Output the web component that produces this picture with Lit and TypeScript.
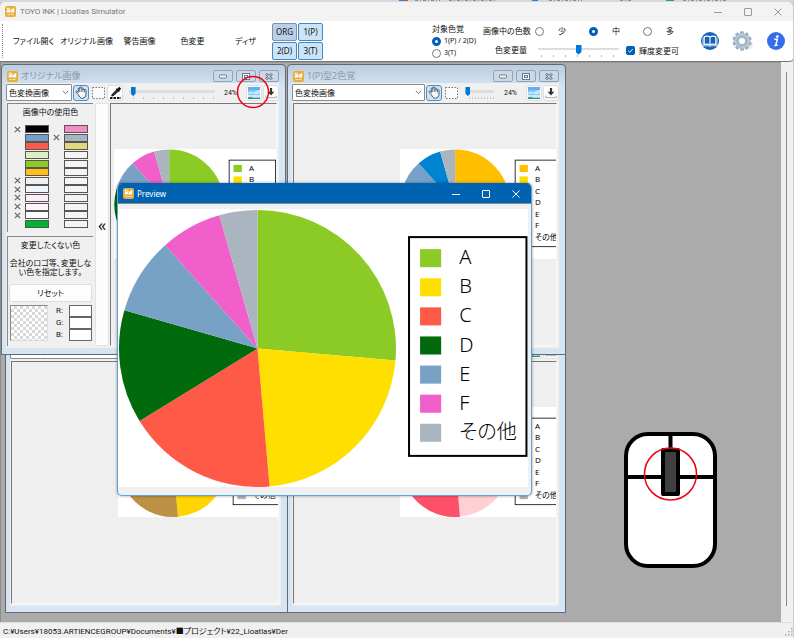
import { LitElement, html, svg, css, nothing } from "lit";
import { customElement, property } from "lit/decorators.js";
import { classMap } from "lit/directives/class-map.js";

const base = css`
  * { box-sizing: border-box; }
  button, select, input { font: inherit; font-feature-settings: inherit; color: inherit; margin: 0; padding: 0; }
  svg { display: block; flex: none; }
`;

const logo = html`<svg width="11" height="11" viewBox="0 0 11 11" aria-hidden="true">
  <rect width="11" height="11" rx="2" fill="#e8ad3a" />
  <path d="M1.800 1.800H4.600L6 4L9.200 1.800V6.600H1.800Z" fill="#fff" />
  <path d="M1.800 4.200L4 2.400L6 5.200L4.600 6.600" fill="none" stroke="#e8ad3a" stroke-width=".7" />
  <path d="M2.500 8.500H4.500M5.500 8.500H8.500" stroke="#fbe7bd" stroke-width="1" />
</svg>`;

const hand = html`<svg width="12" height="13" viewBox="0 0 12 13" fill="#f4f8fc" stroke="#3d4650" stroke-width=".9" stroke-linejoin="round" aria-hidden="true">
  <path d="M3.200 8.500L1.200 6.300C.6 5.500 1.500 4.800 2.200 5.400L3.300 6.500V2.600C3.300 1.700 4.700 1.700 4.700 2.600V1.700C4.700.7 6.300.7 6.300 1.700V2.300C6.400 1.400 7.900 1.500 7.900 2.500V3.500C8.100 2.700 9.500 2.800 9.500 3.700C10.200 3.200 11 3.700 11 4.400V8C11 10.600 9.600 12.300 7.200 12.300C5.200 12.300 4.300 10.500 3.200 8.500Z" />
  <path d="M4.700 2.600V6M6.300 2.300V5.800M7.900 3V6M9.500 3.700V6.300" fill="none" stroke-width=".7" />
</svg>`;
const marquee = html`<svg width="13" height="12" viewBox="0 0 13 12" aria-hidden="true"><rect x=".5" y=".5" width="12" height="11" fill="#fafafa" stroke="#777" stroke-dasharray="1.500 1.500" /></svg>`;
const dropper = html`<svg width="13" height="13" viewBox="0 0 13 13" aria-hidden="true">
  <path d="M10.200.8L12.200 2.800L10.400 4.700L10.800 5.200L9.800 6.100L6.800 3.200L7.800 2.300L8.300 2.700Z" fill="#111" />
  <path d="M7.500 4L9 5.500L4.500 9.500L2.800 10L3.300 8.200Z" fill="#333" stroke="#111" stroke-width="1" />
  <path d="M1 12H12" stroke="#111" stroke-width="2" stroke-dasharray="2.500 1" />
</svg>`;
const picture = html`<svg width="12" height="12" viewBox="0 0 12 12" aria-hidden="true">
  <rect width="12" height="12" fill="#7cc4f4" /><rect width="12" height="3" fill="#5fb0f0" />
  <path d="M0 5.500L3 4.500L6 5L9 3.500L12 3V6.500L8 7.500L4 6.500L0 7.500Z" fill="#c4e6fa" />
  <rect y="8" width="12" height="2.500" fill="#c9eef2" />
  <path d="M0 10.500L3 10L6 11L12 10.800V12H0Z" fill="#3f8a86" />
</svg>`;
const download = html`<svg width="12" height="12" viewBox="0 0 12 12" aria-hidden="true">
  <path d="M6 1V5.500" stroke="#333" stroke-width="2.200" /><path d="M2.600 4.800H9.400L6 8.400Z" fill="#333" />
  <path d="M.7 8.500V10.700H11.300V8.500" fill="none" stroke="#aaa" />
</svg>`;
const chevron = html`<svg class="chevron" width="7" height="5" viewBox="0 0 7 5" aria-hidden="true"><path d="M.8.8L3.500 3.700L6.200.8" fill="none" stroke="#555" stroke-width=".8" /></svg>`;

const cross = html`<svg width="7" height="7" viewBox="0 0 7 7" aria-label="除外"><path d="M.8.8L6.200 6.200M6.200.8L.8 6.200" stroke="#666" stroke-width="1.200" /></svg>`;

const stops = [0, 95, 175, 238.4, 286, 318.2, 344, 360];
const names = ["A", "B", "C", "D", "E", "F", "その他"];
const ORIGINAL = ["#8ccb25", "#ffdf00", "#ff5a47", "#006a0c", "#78a1c6", "#f05fca", "#aab5c0"];

/** A pie chart of seven shares with its legend. */
@customElement("pie-image")
export class PieImage extends LitElement {
  static styles = css`
    :host { display: block; flex: none; background: #fff; }
    svg { display: block; height: 100%; }
    text { font: 20px "Noto Sans", "Noto Sans CJK JP", sans-serif; font-weight: var(--legend-weight, 300); font-feature-settings: "palt"; fill: #000; }
  `;
  @property({ attribute: false }) colors: string[] = ORIGINAL;

  private slice(i: number) {
    const at = (deg: number) => {
      const a = (deg * Math.PI) / 180;
      return `${139 + 138 * Math.sin(a)} ${139 - 138 * Math.cos(a)}`;
    };
    return svg`<path d="M139 139L${at(stops[i])}A138 138 0 0 1 ${at(stops[i + 1])}Z" fill=${this.colors[i]} />`;
  }

  render() {
    return html`<svg viewBox="0 0 409 277" role="img" aria-label="円グラフ">
      ${this.colors.map((_, i) => this.slice(i))}
      <rect x="290" y="28" width="117" height="218" fill="#fff" stroke="#000" stroke-width="2" />
      ${names.map((n, i) => svg`
        <rect x="301" y=${40 + i * 29} width="21" height="18" fill=${this.colors[i]} />
        <text x="340" y=${55 + i * 29}>${n}</text>`)}
    </svg>`;
  }
}

const used: [string, boolean][][] = [
  [["#000", true], ["#f48dc4", false]],
  [["#739fc6", false], ["#a8b4bf", true]],
  [["#ff5a47", false], ["#e2d97c", false]],
  [["#dff0c0", false], ["#f4f4f4", false]],
  [["#8ccb25", false], ["#f4f4f4", false]],
  [["#ffbe18", false], ["#f4f4f4", false]],
  [["#f0efed", true], ["#f4f4f4", false]],
  [["#eef6fd", true], ["#f4f4f4", false]],
  [["#fbeef9", true], ["#f4f4f4", false]],
  [["#fdf4fc", true], ["#f4f4f4", false]],
  [["#fff", true], ["#f4f4f4", false]],
  [["#00b432", false], ["#f4f4f4", false]],
];

/** Side panel listing the colours in use and the colour to keep. */
@customElement("color-panel")
export class ColorPanel extends LitElement {
  static styles = [base, css`
    :host { display: flex; gap: 2px; }
    .panels { display: flex; flex-direction: column; gap: 4px; width: 86px; }
    section { border-top: 1px solid #888; border-left: 1px solid #888; text-align: center; }
    .used { height: 130px; }
    .keep { height: 110px; padding: 0 1px; }
    h2 { margin: 0; padding-top: 2px; font-size: 8px; font-weight: 400; line-height: 12px; }
    .grid { display: grid; grid-template-columns: 7px 24px 7px 24px; grid-template-rows: repeat(12, 1fr); column-gap: 4px; height: 103px; margin: 7px 0 0 6px; align-items: center; }
    .cell { height: 8px; border: 1px solid #555; }
    p { margin: 7px 0 6px; line-height: 9px; height: 20px; }
    .reset { display: block; width: 100%; height: 18px; border: 1px solid #ddd; border-radius: 2px; background: #fdfdfd; }
    .rgb { display: flex; justify-content: space-between; padding: 3px 0 0 1px; }
    .swatch { width: 38px; height: 36px; border: 1px solid #888; border-color: #888 #ddd #ddd #888; background: repeating-conic-gradient(#d8d8d8 0 25%, #fff 0 50%) 0 0 / 6px 6px; }
    .fields { width: 36px; font-family: Roboto, sans-serif; line-height: 10px; }
    label { display: flex; justify-content: space-between; align-items: center; height: 12px; }
    input { width: 23px; height: 12px; border: 1px solid #666; background: #fff; border-radius: 0; }
    .fold { width: 14px; border: 1px solid #e2e2e2; border-radius: 2px; background: #fcfcfc; font-size: 16px; line-height: 16px; }
  `];

  render() {
    return html`
      <div class="panels">
        <section class="used">
          <h2>画像中の使用色</h2>
          <div class="grid">
            ${used.flat().map(([c, off]) => html`<span>${off ? cross : nothing}</span><span class="cell" style="background:${c}"></span>`)}
          </div>
        </section>
        <section class="keep">
          <h2>変更したくない色</h2>
          <p>会社のロゴ等、変更しな<br />い色を指定します。</p>
          <button class="reset">リセット</button>
          <div class="rgb">
            <div class="swatch"></div>
            <div class="fields">
              ${["R:", "G:", "B:"].map((l) => html`<label>${l}<input type="text" /></label>`)}
            </div>
          </div>
        </section>
      </div>
      <button class="fold" aria-label="パネルを閉じる">«</button>`;
  }
}

/** A child window with its own tool row and picture. */
@customElement("sim-window")
export class SimWindow extends LitElement {
  static styles = [base, css`
    :host { display: flex; flex-direction: column; height: 291px; padding: 0 6px 6px 4px; border: 1px solid #5f6a76; border-radius: 4px 4px 0 0; background: linear-gradient(#bccddf, #d3e1ef 20px, #d7e5f3 21px); }
    header { display: flex; align-items: center; gap: 3px; height: 18px; padding: 4px 0 0 1px; flex: none; color: #8c99a9; font-size: 9px; }
    .caption { display: flex; gap: 3px; margin-left: auto; }
    .caption button { display: grid; place-items: center; width: 20px; height: 12px; border: 1px solid #8fa3ba; border-radius: 2px; background: #cbd8e6; }
    .tools { display: flex; align-items: center; gap: 1px; height: 19px; flex: none; background: #f0f0f0; }
    .pick { position: relative; flex: none; width: 66px; }
    .wide .pick { width: 133px; }
    select { appearance: none; display: block; width: 100%; height: 17px; padding-left: 2px; border: 1px solid #8a8a8a; border-radius: 1px; background: #fff; font-size: 8px; }
    .chevron { position: absolute; right: 3px; top: 6px; }
    .tool { display: grid; place-items: center; flex: none; width: 16px; height: 16px; border: 1px solid transparent; border-radius: 3px; background: none; }
    .on { border-color: #4b8fc6; background: #cce4f7; }
    .plain { border-color: #dedede; background: #fdfdfd; }
    .zoom { display: flex; flex: 1; align-items: center; justify-content: space-between; padding: 0 8px 0 5px; }
    .slide { width: 86px; }
    .wide .slide { width: 29px; }
    input { appearance: none; display: block; width: 100%; height: 10px; background: linear-gradient(#dedede, #dedede) 0 3px / 100% 3px no-repeat; }
    input::-webkit-slider-thumb { appearance: none; width: 5px; height: 9px; background: #0078d7; clip-path: polygon(0 0, 100% 0, 100% 75%, 50% 100%, 0 75%); }
    .ticks { height: 2px; margin-left: 4px; background: repeating-linear-gradient(90deg, #c4c4c4 0 1px, transparent 1px 10px); }
    .wide .ticks { background: repeating-linear-gradient(90deg, #c4c4c4 0 1px, transparent 1px 3px); }
    output { font: 7px Roboto, sans-serif; }
    .body { display: flex; gap: 1px; flex: 1; min-height: 0; padding: 1px 2px 2px 1px; background: #f0f0f0; }
    .view { flex: 1; min-width: 0; overflow: hidden; border: 1px solid; border-color: #777 #fafafa #fafafa #777; background: #efefef; padding: 45px 0 0 106px; }
    .near { padding-left: 3px; }
    pie-image { width: 163px; height: 110px; --legend-weight: 400; }
  `];
  @property() caption = "";
  @property({ type: Boolean }) panel = false;
  @property({ attribute: false }) colors: string[] = ORIGINAL;

  render() {
    return html`
      <header>${logo}<span>${this.caption}</span>
        <div class="caption">
          <button aria-label="最小化"><svg width="8" height="5" viewBox="0 0 8 5"><rect x=".5" y="1" width="7" height="3" rx="1" fill="#fff" stroke="#69778a" /></svg></button>
          <button aria-label="最大化"><svg width="8" height="7" viewBox="0 0 8 7"><rect x=".5" y=".5" width="7" height="6" fill="#fff" stroke="#69778a" /><rect x="2.500" y="2.500" width="3" height="2" fill="none" stroke="#69778a" /></svg></button>
          <button aria-label="閉じる"><svg width="8" height="7" viewBox="0 0 8 7"><path d="M1 .8L7 6.200M7 .8L1 6.200" stroke="#59677a" stroke-width="2.600" /><path d="M1.300 1L6.700 6M6.700 1L1.300 6" stroke="#fff" stroke-width="1" /></svg></button>
        </div>
      </header>
      <div class=${classMap({ tools: true, wide: !this.panel })}>
        <span class="pick"><select aria-label="表示画像"><option>色変換画像</option></select>${chevron}</span>
        <button class="tool on" aria-label="移動">${hand}</button>
        <button class="tool" aria-label="範囲選択">${marquee}</button>
        ${this.panel ? html`<button class="tool plain" aria-label="スポイト">${dropper}</button>` : nothing}
        <div class="zoom">
          <div class="slide"><input type="range" min="0" max="100" value="2" aria-label="倍率" /><div class="ticks"></div></div>
          <output>24%</output>
        </div>
        <button class="tool plain" aria-label="プレビュー">${picture}</button>
        <button class="tool plain" aria-label="保存">${download}</button>
      </div>
      <div class="body">
        ${this.panel ? html`<color-panel></color-panel>` : nothing}
        <div class=${classMap({ view: true, near: this.panel })}><pie-image .colors=${this.colors}></pie-image></div>
      </div>`;
  }
}

const teeth = Array.from({ length: 10 }, (_, i) => svg`<rect x="-1.600" y="-9.400" width="3.200" height="4" rx=".6" transform="rotate(${i * 36})" />`);

@customElement("app-root")
export class AppRoot extends LitElement {
  static styles = [base, css`
    :host { display: flex; flex-direction: column; min-height: 100vh; padding-right: 1px; background: #c9ccd1; color: #111; font: 8px/12px "Noto Sans", "Noto Sans CJK JP", sans-serif; font-feature-settings: "palt"; }
    .behind { height: 2px; background: #d5d8de; overflow: hidden; }
    .title { display: flex; align-items: center; gap: 4px; height: 19px; padding: 0 10px 0 5px; border-radius: 5px 5px 0 0; background: #f3f3f3; color: #777; font-family: Roboto, sans-serif; }
    .title .caption { display: flex; gap: 20px; margin-left: auto; }
    .caption button { display: grid; place-items: center; width: 10px; height: 10px; border: 0; background: none; }
    .bar { display: flex; align-items: center; height: 41px; padding: 0 8px 0 0; border-bottom: 1px solid #777; background: #fff; border-radius: 0 0 4px 0; }
    .grip { height: 34px; border-left: 1px dotted #888; margin: 0 4px 0 2px; }
    nav { display: grid; grid-template-columns: repeat(5, 53px); }
    nav button { border: 0; background: none; white-space: nowrap; height: 20px; }
    .modes { display: grid; grid-template-columns: 25px 25px; grid-auto-rows: 18px; gap: 1px; }
    .modes button { border: 1px solid #4488bd; border-radius: 2px; background: #cce4f7; }
    .modes .current { background: #b9cfe8; border-color: #7c93ad; }
    fieldset { margin: 0; padding: 0; border: 0; min-width: 0; }
    .target { margin: 0 7px 0 109px; width: 44px; }
    .target b { display: block; font-weight: 400; }
    label { display: flex; align-items: center; white-space: nowrap; }
    .target label { gap: 3px; font-size: 7px; }
    .radio { appearance: none; flex: none; width: 9px; height: 9px; border: 1px solid #777; border-radius: 50%; background: #fff; }
    .radio:checked { border: 3px solid #005fb8; }
    .amount { display: grid; grid-template-columns: 44px 142px; column-gap: 8px; row-gap: 7px; }
    .amount > span { text-align: right; white-space: nowrap; }
    .counts { display: flex; gap: 23px; }
    .counts label { gap: 14px; }
    .line { display: flex; align-items: center; gap: 7px; height: 13px; }
    .slide { flex: none; width: 84px; padding-left: 3px; }
    .range { appearance: none; display: block; width: 100%; height: 10px; margin: 0; background: linear-gradient(#dedede, #dedede) 0 3px / 100% 2px no-repeat; }
    .range::-webkit-slider-thumb { appearance: none; width: 6px; height: 10px; background: #0078d7; clip-path: polygon(0 0, 100% 0, 100% 75%, 50% 100%, 0 75%); }
    .ticks { height: 2px; margin-left: 3px; background: repeating-linear-gradient(90deg, #bbb 0 1px, transparent 1px 12px); }
    .line label { gap: 4px; }
    .check { position: relative; width: 9px; height: 9px; }
    .check input { appearance: none; display: block; width: 9px; height: 9px; border-radius: 2px; background: #005fb8; }
    .check svg { position: absolute; inset: 0; }
    .links { display: flex; align-items: center; gap: 14px; margin-left: auto; }
    .links a { display: block; }
    .desk { position: relative; display: flex; flex: 1; min-height: 560px; background: #ababab; border-left: 1px solid #8c8c8c; }
    .area { position: relative; flex: 1; overflow: hidden; border-top: 1px solid #999; }
    .scroll { width: 12px; padding: 10px 5px 16px; background: #f0f0f0; }
    .thumb { height: 100%; border-left: 1px solid #888; }
    sim-window, .preview, .ring, .mouse { position: absolute; }
    .w1 { left: 0; top: 1px; width: 285px; }
    .w2 { left: 286px; top: 1px; width: 279px; }
    .w3 { left: 4px; top: 259px; width: 283px; }
    .w4 { left: 286px; top: 259px; width: 279px; }
    .preview { left: 116px; top: 120px; width: 415px; height: 313px; display: flex; flex-direction: column; border: 1px solid #5fa3d9; border-top-color: #0063b1; border-radius: 5px; overflow: hidden; background: #f0f0f0; box-shadow: 0 0 3px #0006; }
    .preview header { display: flex; align-items: center; gap: 3px; height: 19px; padding: 0 10px 0 5px; background: #0063b1; color: #fff; flex: none; }
    .preview .caption { display: flex; gap: 20px; margin-left: auto; }
    .frame { border-top: 1px solid #888; padding-top: 5px; }
    .frame pie-image { height: 278px; width: 410px; }
    .ring { left: 235px; top: 12px; }
    .mouse { left: 622px; top: 368px; }
    footer { display: flex; align-items: center; justify-content: space-between; height: 16px; padding: 3px 0 0 3px; background: #f0f0f0; border-top: 1px solid #ddd; white-space: nowrap; font-family: Roboto, "Noto Sans CJK JP", sans-serif; }
  `];

  render() {
    const caption = (color: string) => html`<div class="caption">
      <button aria-label="最小化"><svg width="8" height="8" viewBox="0 0 8 8"><path d="M0 4.500H8" stroke=${color} /></svg></button>
      <button aria-label="最大化"><svg width="8" height="8" viewBox="0 0 8 8"><rect x=".5" y=".5" width="7" height="7" rx=".5" fill="none" stroke=${color} /></svg></button>
      <button aria-label="閉じる"><svg width="8" height="8" viewBox="0 0 8 8"><path d="M.5.5L7.500 7.500M7.500.5L.5 7.500" stroke=${color} /></svg></button>
    </div>`;
    return html`
      <div class="behind"><svg width="794" height="2" aria-hidden="true">
        <path d="M399 .5H404M532 .5H538" stroke="#2f7fe0" stroke-width="1" /><path d="M404 .5H408" stroke="#e0443a" /><path d="M666 .5H674" stroke="#2aa84a" />
        <path d="M415 .5H440M449 .5H496M549 .5H582M620 .5H632M683 .5H728" stroke="#8b9099" stroke-dasharray="3 2 1 2" />
      </svg></div>
      <div class="title">${logo}<span>TOYO INK | Lioatlas Simulator</span>${caption("#999")}</div>
      <div class="bar">
        <div class="grip"></div>
        <nav>${["ファイル開く", "オリジナル画像", "警告画像", "色変更", "ディザ"].map((t) => html`<button>${t}</button>`)}</nav>
        <div class="modes">${["ORG", "1(P)", "2(D)", "3(T)"].map((t, i) => html`<button class=${classMap({ current: i === 0 })}>${t}</button>`)}</div>
        <fieldset class="target"><b>対象色覚</b>
          <label><input class="radio" type="radio" name="target" checked />1(P) / 2(D)</label>
          <label><input class="radio" type="radio" name="target" />3(T)</label>
        </fieldset>
        <div class="amount">
          <span>画像中の色数</span>
          <fieldset class="counts">${["少", "中", "多"].map((t, i) => html`<label><input class="radio" type="radio" name="count" ?checked=${i === 1} />${t}</label>`)}</fieldset>
          <span>色変更量</span>
          <div class="line">
            <div class="slide"><input class="range" type="range" aria-label="色変更量" value="50" /><div class="ticks"></div></div>
            <label><span class="check"><input type="checkbox" checked /><svg width="9" height="9" viewBox="0 0 9 9"><path d="M2.200 4.700L3.800 6.200L6.800 3" fill="none" stroke="#fff" stroke-width=".9" /></svg></span>輝度変更可</label>
          </div>
        </div>
        <div class="links">
          <a href="#manual" aria-label="マニュアル"><svg width="18" height="18" viewBox="0 0 18 18"><circle cx="9" cy="9" r="9" fill="#1763b8" /><path d="M9 5C7.500 4 5 4 3.200 4.700V12.500C5 12 7.500 12 9 13C10.500 12 13 12 14.800 12.500V4.700C13 4 10.500 4 9 5ZM9 5V13" fill="none" stroke="#fff" stroke-width="1.100" /><path d="M2 5.500V13.800H7.500L9 14.500L10.500 13.800H16V5.500" fill="none" stroke="#fff" stroke-width=".8" /></svg></a>
          <a href="#settings" aria-label="設定"><svg width="20" height="20" viewBox="-9 -10 20 20"><ellipse cx="4" cy="4" rx="7" ry="5" fill="#ddd" opacity=".6" /><g fill="#a0b5c8" stroke="#7b93a8" stroke-width=".4">${teeth}</g><circle r="5.700" fill="none" stroke="#a3b8ca" stroke-width="3.600" /><circle r="6.400" fill="none" stroke="#cbd8e4" stroke-width=".8" /><circle r="3.800" fill="#fff" stroke="#7f96aa" stroke-width=".8" /></svg></a>
          <a href="#info" aria-label="情報"><svg width="18" height="18" viewBox="0 0 18 18"><circle cx="9" cy="9" r="9" fill="#356ee8" /><circle cx="10.300" cy="4.600" r="1.400" fill="#fff" /><path d="M7.300 7.300H10.300L8.800 13.200H10.600M7.300 13.400H8.800" fill="none" stroke="#fff" stroke-width="1.500" /></svg></a>
        </div>
      </div>
      <main class="desk">
        <div class="area">
          <sim-window class="w3" caption="2(D)型2色覚" .colors=${["#ffc83c", "#ffd400", "#bc9144", "#6e5b12", "#7b9cc8", "#5f86c8", "#aab5c0"]}></sim-window>
          <sim-window class="w4" caption="3(T)型2色覚" .colors=${["#8fc3cf", "#ffcfd6", "#ff506a", "#17626a", "#6aa8b5", "#ee6f84", "#a6b4b8"]}></sim-window>
          <sim-window class="w2" caption="1(P)型2色覚" .colors=${["#ffbe00", "#ffdc00", "#a08c3c", "#6e5b00", "#76a2c9", "#0083d0", "#aab5c0"]}></sim-window>
          <sim-window class="w1" caption="オリジナル画像" panel></sim-window>
          <section class="preview">
            <header>${logo}<span>Preview</span>${caption("#fff")}</header>
            <div class="frame"><pie-image></pie-image></div>
          </section>
          <svg class="ring" width="34" height="34" aria-hidden="true"><circle cx="17" cy="17" r="15.500" fill="none" stroke="#f00014" stroke-width="1.500" /></svg>
          <svg class="mouse" width="96" height="138" viewBox="0 0 96 138" role="img" aria-label="マウスホイール">
            <rect x="3" y="3" width="89" height="132" rx="22" fill="#fff" stroke="#000" stroke-width="4" />
            <path d="M3 46H92M47.500 3V18" stroke="#000" stroke-width="4" />
            <rect x="40" y="19" width="15" height="44" fill="#404040" stroke="#000" stroke-width="4" stroke-linejoin="round" />
            <circle cx="47.500" cy="43" r="26" fill="none" stroke="#f00014" stroke-width="1.500" />
          </svg>
        </div>
        <div class="scroll"><div class="thumb"></div></div>
      </main>
      <footer><span>C:¥Users¥18053.ARTIENCEGROUP¥Documents¥■プロジェクト¥22_Lioatlas¥Der</span>
        <svg width="8" height="8" viewBox="0 0 8 8" fill="#aaa" aria-hidden="true"><path d="M6 0h1.500v1.500H6zM3 3h1.500v1.500H3zM6 3h1.500v1.500H6zM0 6h1.500v1.500H0zM3 6h1.500v1.500H3zM6 6h1.500v1.500H6z" /></svg>
      </footer>`;
  }
}
